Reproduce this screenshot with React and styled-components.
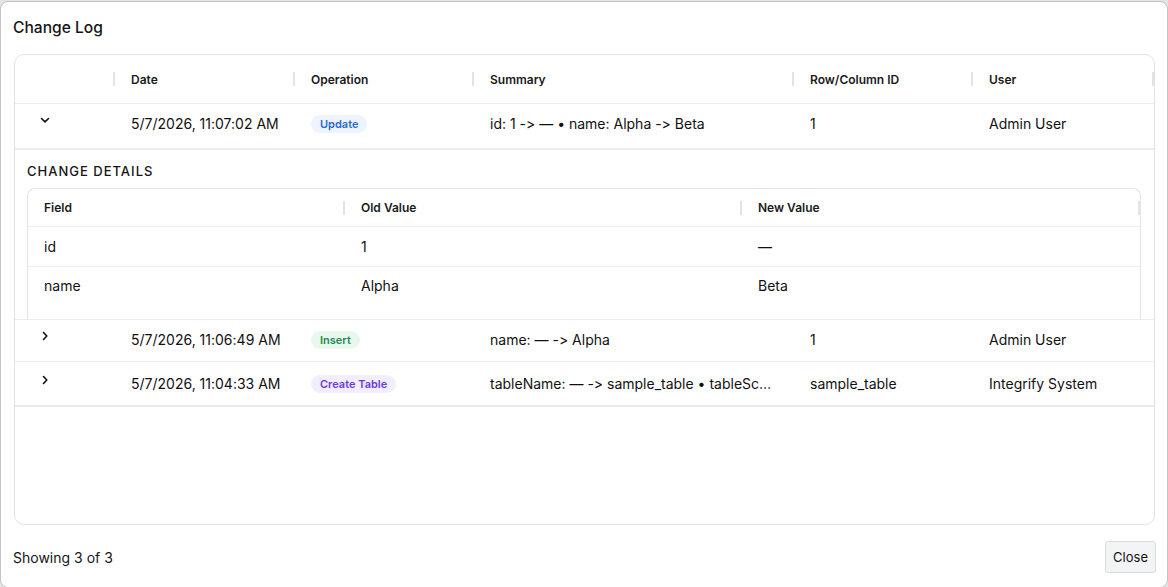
import React, { useState } from "react";
import styled, { createGlobalStyle } from "styled-components";

const GlobalStyle = createGlobalStyle`
  html, body {
    margin: 0;
    padding: 0;
    background: #e4e4e4;
    font-family: Inter, "Noto Sans", "Liberation Sans", sans-serif;
    font-feature-settings: "calt" 0, "liga" 0;
    color: #111;
  }
  * { box-sizing: border-box; }
`;

// change log data
const entries = [
  {
    id: "a",
    date: "5/7/2026, 11:07:02 AM",
    op: "update",
    summary: "id: 1 -> — • name: Alpha -> Beta",
    rowId: "1",
    user: "Admin User",
    details: [
      { field: "id", oldValue: "1", newValue: "—" },
      { field: "name", oldValue: "Alpha", newValue: "Beta" },
    ],
  },
  {
    id: "b",
    date: "5/7/2026, 11:06:49 AM",
    op: "insert",
    summary: "name: — -> Alpha",
    rowId: "1",
    user: "Admin User",
    details: [],
  },
  {
    id: "c",
    date: "5/7/2026, 11:04:33 AM",
    op: "create",
    summary: "tableName: — -> sample_table • tableSchema: — -> {...}",
    rowId: "sample_table",
    user: "Integrify System",
    details: [],
  },
];

const opStyles = {
  update: { label: "Update", color: "#2a6bd1", bg: "#edf4fd" },
  insert: { label: "Insert", color: "#1d8a4e", bg: "#e9f8ef" },
  create: { label: "Create Table", color: "#6a3bd8", bg: "#f3eefd" },
};

const columns = ["", "Date", "Operation", "Summary", "Row/Column ID", "User"];
const gridCols = "100px 180px 179px 320px 179px 1fr";

const Chevron = ({ open }) => (
  <svg width="12" height="12" viewBox="0 0 12 12" fill="none">
    {open ? (
      <path d="M2.5 4.5 L6 7.8 L9.5 4.5" stroke="#111" strokeWidth="1.6" strokeLinecap="round" strokeLinejoin="round" />
    ) : (
      <path d="M4.5 2.5 L7.8 6 L4.5 9.5" stroke="#111" strokeWidth="1.6" strokeLinecap="round" strokeLinejoin="round" />
    )}
  </svg>
);

const App = () => {
  const [openId, setOpenId] = useState("a"); // expanded row

  return (
    <>
      <GlobalStyle />
      <Dialog>
        <Title>Change Log</Title>

        <TableWrap>
          <HeaderRow>
            {columns.map((c, i) => (
              <HeadCell key={i}>{c}</HeadCell>
            ))}
          </HeaderRow>

          {entries.map((e, idx) => {
            const op = opStyles[e.op];
            const open = openId === e.id;
            const last = idx === entries.length - 1;
            return (
              <React.Fragment key={e.id}>
                <Row
                  thick={open || last}
                  h={open ? 46 : last ? 45 : 42}
                  pb={open ? 5 : last ? 0 : 2}
                >
                  <Cell>
                    <ExpandButton onClick={() => setOpenId(open ? null : e.id)}>
                      <Chevron open={open} />
                    </ExpandButton>
                  </Cell>
                  <Cell>{e.date}</Cell>
                  <Cell>
                    <Badge color={op.color} bg={op.bg}>
                      {op.label}
                    </Badge>
                  </Cell>
                  <Cell>
                    <Ellipsis>{e.summary}</Ellipsis>
                  </Cell>
                  <Cell>{e.rowId}</Cell>
                  <Cell>{e.user}</Cell>
                </Row>

                {open && (
                  <Details>
                    <DetailsTitle>Change Details</DetailsTitle>
                    <InnerTable>
                      <InnerHeader>
                        <InnerHead>Field</InnerHead>
                        <InnerHead>Old Value</InnerHead>
                        <InnerHead>New Value</InnerHead>
                      </InnerHeader>
                      {e.details.map((d) => (
                        <InnerRow key={d.field}>
                          <InnerCell>{d.field}</InnerCell>
                          <InnerCell>{d.oldValue}</InnerCell>
                          <InnerCell>{d.newValue}</InnerCell>
                        </InnerRow>
                      ))}
                    </InnerTable>
                  </Details>
                )}
              </React.Fragment>
            );
          })}
        </TableWrap>

        <Footer>
          <span>Showing 3 of 3</span>
          <CloseButton>Close</CloseButton>
        </Footer>
      </Dialog>
    </>
  );
};

const Dialog = styled.div`
  width: 1168px;
  height: 587px;
  margin-top: 1px;
  background: #fff;
  border: 1px solid #c4c4c4;
  border-radius: 8px;
  display: flex;
  flex-direction: column;
  overflow: hidden;
`;

const Title = styled.h2`
  margin: 0;
  padding: 16px 12px 0;
  height: 52px;
  font-size: 15.6px;
  font-weight: 500;
  color: #151515;
`;

const TableWrap = styled.div`
  margin: 0 12px 0 13px;
  height: 471px;
  border: 1px solid #e2e2e2;
  border-radius: 10px;
  overflow: hidden;
`;

const HeaderRow = styled.div`
  display: grid;
  grid-template-columns: ${gridCols};
  height: 49px;
  border-bottom: 1px solid #ececec;
  align-items: center;
`;

const HeadCell = styled.div`
  position: relative;
  padding: 0 16px;
  font-size: 12px;
  font-weight: 600;
  color: #1a1a1a;

  &::after {
    content: "";
    position: absolute;
    right: 0;
    top: 50%;
    margin-top: -7px;
    width: 2px;
    height: 14px;
    background: #e3e3e3;
  }
`;

const Row = styled.div`
  display: grid;
  grid-template-columns: ${gridCols};
  align-items: center;
  height: ${({ h }) => h}px;
  padding-bottom: ${({ pb }) => pb}px;
  border-bottom: ${({ thick }) => (thick ? "2px solid #ebebeb" : "1px solid #ececec")};
  font-size: 14px;
`;

const Cell = styled.div`
  padding: 0 16px;
  min-width: 0;
  white-space: nowrap;
`;

const Ellipsis = styled.div`
  overflow: hidden;
  text-overflow: ellipsis;
  white-space: nowrap;
`;

const ExpandButton = styled.button`
  border: none;
  background: none;
  padding: 0;
  width: 28px;
  height: 24px;
  display: flex;
  align-items: flex-start;
  justify-content: center;
  margin-top: 4px;
  cursor: pointer;
`;

const Badge = styled.span`
  display: inline-block;
  padding: 2px 9px;
  border-radius: 9px;
  font-size: 11px;
  font-weight: 600;
  line-height: 14px;
  color: ${({ color }) => color};
  background: ${({ bg }) => bg};
`;

const Details = styled.div`
  height: 170px;
  padding: 13px 13px 0 12px;
  border-bottom: 1px solid #ececec;
  overflow: hidden;
`;

const DetailsTitle = styled.div`
  font-size: 13px;
  font-weight: 500;
  letter-spacing: 1px;
  text-transform: uppercase;
  color: #151515;
  height: 25px;
`;

const InnerTable = styled.div`
  border: 1px solid #e4e4e4;
  border-bottom: none;
  border-radius: 8px 8px 0 0;
  height: 200px;
`;

const innerCols = "317px 397px 1fr";

const InnerHeader = styled.div`
  display: grid;
  grid-template-columns: ${innerCols};
  height: 38px;
  align-items: center;
  border-bottom: 1px solid #ececec;
`;

const InnerHead = styled(HeadCell)``;

const InnerRow = styled.div`
  display: grid;
  grid-template-columns: ${innerCols};
  height: 40px;
  align-items: center;
  border-bottom: 1px solid #ececec;
  font-size: 14px;

  &:last-child {
    border-bottom: none;
    padding-bottom: 3px;
  }
`;

const InnerCell = styled.div`
  padding: 0 16px;
`;

const Footer = styled.div`
  flex: 1;
  display: flex;
  align-items: center;
  justify-content: space-between;
  padding: 2px 11px 0 12px;
  font-size: 14px;
  color: #151515;
`;

const CloseButton = styled.button`
  font-family: inherit;
  font-size: 13px;
  color: #151515;
  background: #f3f4f6;
  border: 1px solid #dcdcdc;
  border-radius: 3px;
  padding: 0 7px;
  height: 32px;
  cursor: pointer;
`;

export default App;
